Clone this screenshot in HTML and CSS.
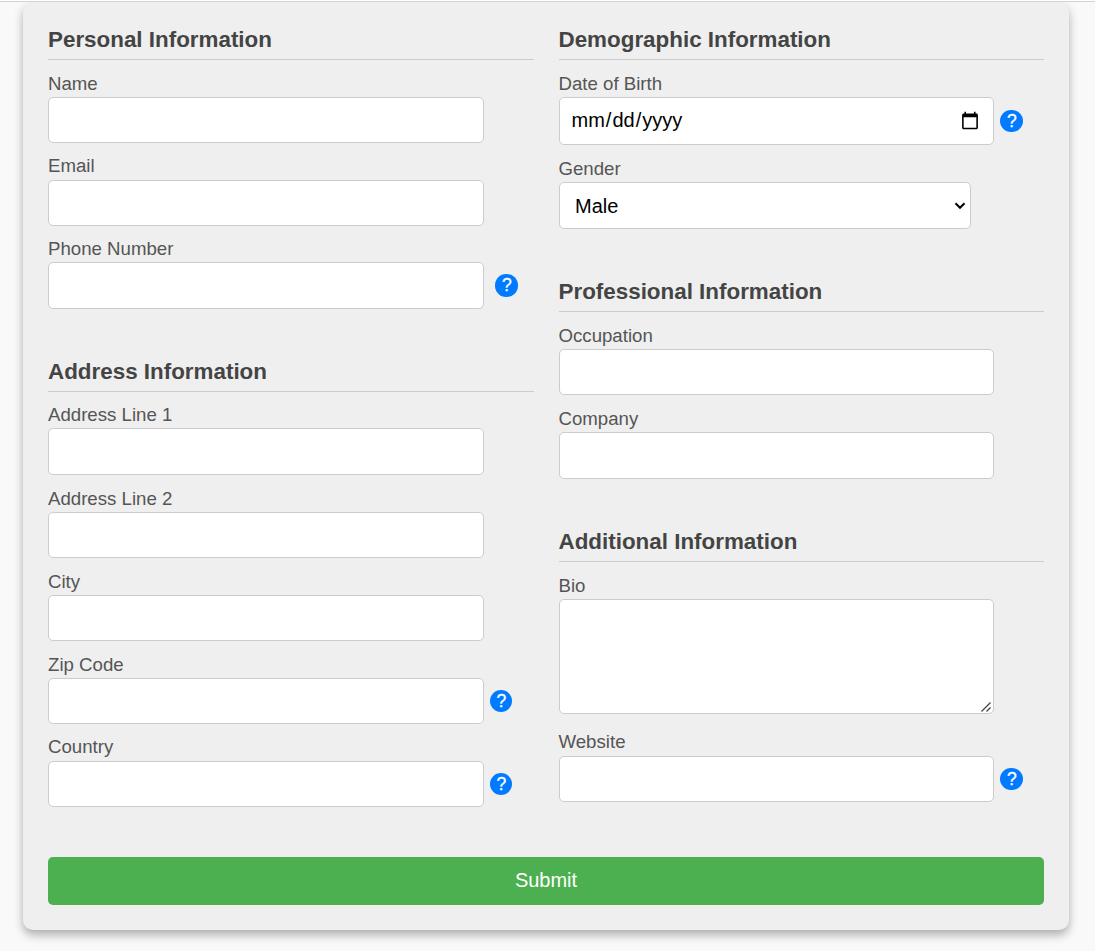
FILE: index.html
```html
<!DOCTYPE html>
<html lang="en">
<head>
<meta charset="utf-8">
<title>Information Form</title>
<link rel="stylesheet" href="styles.css">
</head>
<body>
<div class="page">
  <form class="card">
    <div class="columns">
      <div class="column">
        <section class="group personal">
          <h2>Personal Information</h2>
          <div class="field"><label for="name">Name</label><div class="control"><input id="name" type="text"></div></div>
          <div class="field"><label class="tight" for="email">Email</label><div class="control"><input id="email" type="email"></div></div>
          <div class="field"><label for="phone">Phone Number</label><div class="control spaced"><input id="phone" type="tel"><span class="help">?</span></div></div>
        </section>
        <section class="group">
          <h2>Address Information</h2>
          <div class="field"><label for="a1">Address Line 1</label><div class="control"><input id="a1" type="text"></div></div>
          <div class="field"><label for="a2">Address Line 2</label><div class="control"><input id="a2" type="text"></div></div>
          <div class="field"><label for="city">City</label><div class="control"><input id="city" type="text"></div></div>
          <div class="field"><label for="zip">Zip Code</label><div class="control"><input id="zip" type="text"><span class="help">?</span></div></div>
          <div class="field"><label class="tight" for="country">Country</label><div class="control"><input id="country" type="text"><span class="help">?</span></div></div>
        </section>
      </div>
      <div class="column right">
        <section class="group">
          <h2>Demographic Information</h2>
          <div class="field"><label for="dob">Date of Birth</label><div class="control"><input id="dob" class="date" type="date"><span class="help">?</span></div></div>
          <div class="field"><label for="gender">Gender</label><div class="control select"><select id="gender"><option>Male</option><option>Female</option><option>Other</option></select><svg class="chevron" viewBox="0 0 12 8"><path d="M1.5 1.3 6 5.8l4.500-4.500" fill="none" stroke="#000" stroke-width="2"/></svg></div></div>
        </section>
        <section class="group professional">
          <h2>Professional Information</h2>
          <div class="field"><label for="job">Occupation</label><div class="control"><input id="job" type="text"></div></div>
          <div class="field"><label for="company">Company</label><div class="control"><input id="company" type="text"></div></div>
        </section>
        <section class="group">
          <h2>Additional Information</h2>
          <div class="field bio"><label for="bio">Bio</label><div class="control area"><textarea id="bio"></textarea><svg class="grip" viewBox="0 0 12 12"><path d="M1.500 10.500 10.500 1.500M6.500 10.500l4-4" fill="none" stroke="#444" stroke-width="1.300"/></svg></div></div>
          <div class="field"><label class="tight" for="site">Website</label><div class="control"><input id="site" type="url"><span class="help">?</span></div></div>
        </section>
      </div>
    </div>
    <button type="submit">Submit</button>
  </form>
</div>
</body>
</html>
```
FILE: styles.css
```css
* { box-sizing: border-box; }
body {
  margin: 0;
  background: #fff;
  font-family: "Liberation Sans", Arial, sans-serif;
  overflow: hidden;
}
.page {
  width: 1095px;
  height: 950px;
  margin-top: 1px;
  padding: 0 26px 0 23px;
  background: #f9f9f9;
  border-top: 1px solid #d3d3d3;
  overflow: hidden;
}
.card {
  display: flex;
  flex-direction: column;
  height: 928px;
  padding: 23px 25px 25px;
  background: #efefef;
  border-radius: 10px;
  box-shadow: 0 5px 10px rgba(0, 0, 0, 0.3);
}
.columns {
  display: grid;
  grid-template-columns: 1fr 1fr;
  gap: 25px;
  height: 832px;
}
.column {
  display: flex;
  flex-direction: column;
  gap: 48.05px;
}
.right { gap: 48.4px; }
.group {
  display: flex;
  flex-direction: column;
  gap: 11.9px;
}
.personal { gap: 11.4px; }
.personal h2 { margin-bottom: 0.6px; }
.professional .field + .field { margin-top: 0.3px; }
h2 {
  height: 35px;
  margin: 0;
  border-bottom: 1px solid #ccc;
  color: #444;
  font-size: 22.4px;
  line-height: 29px;
}
label {
  display: block;
  height: 25px;
  color: #555;
  font-size: 18.65px;
  line-height: 23px;
}
.tight { line-height: 22.5px; }
.control {
  display: flex;
  align-items: center;
  gap: 6px;
}
.spaced { gap: 11.5px; }
input, select, textarea {
  display: block;
  width: 435.5px;
  height: 46.25px;
  margin: 0;
  padding: 10px 12px;
  border: 1px solid #ccc;
  border-radius: 5px;
  background: #fff;
  color: #000;
  font-family: inherit;
  font-size: 20px;
}
.date { height: 48px; padding: 10px 11px; }
.select, .area { position: relative; }
select {
  width: 412.5px;
  height: 46.75px;
  padding: 11px 15.5px 9px;
  appearance: none;
}
.chevron {
  position: absolute;
  left: 395px;
  top: 20px;
  width: 12px;
  height: 8px;
}
textarea { height: 115px; resize: none; }
.grip {
  position: absolute;
  left: 421.5px;
  top: 102px;
  width: 12px;
  height: 12px;
}
.bio { margin-bottom: 5.3px; }
.help {
  display: flex;
  align-items: center;
  justify-content: center;
  width: 22.5px;
  height: 22.5px;
  padding-left: 1px;
  border-radius: 50%;
  background: #007bff;
  color: #fff;
  font-size: 17.5px;
  line-height: 22px;
  -webkit-text-stroke: 0.3px #fff;
}
button {
  height: 48px;
  margin: 0;
  padding: 0 0 1px;
  border: 0;
  border-radius: 5px;
  background: #4caf50;
  color: #fff;
  font-family: inherit;
  font-size: 20px;
}
```
